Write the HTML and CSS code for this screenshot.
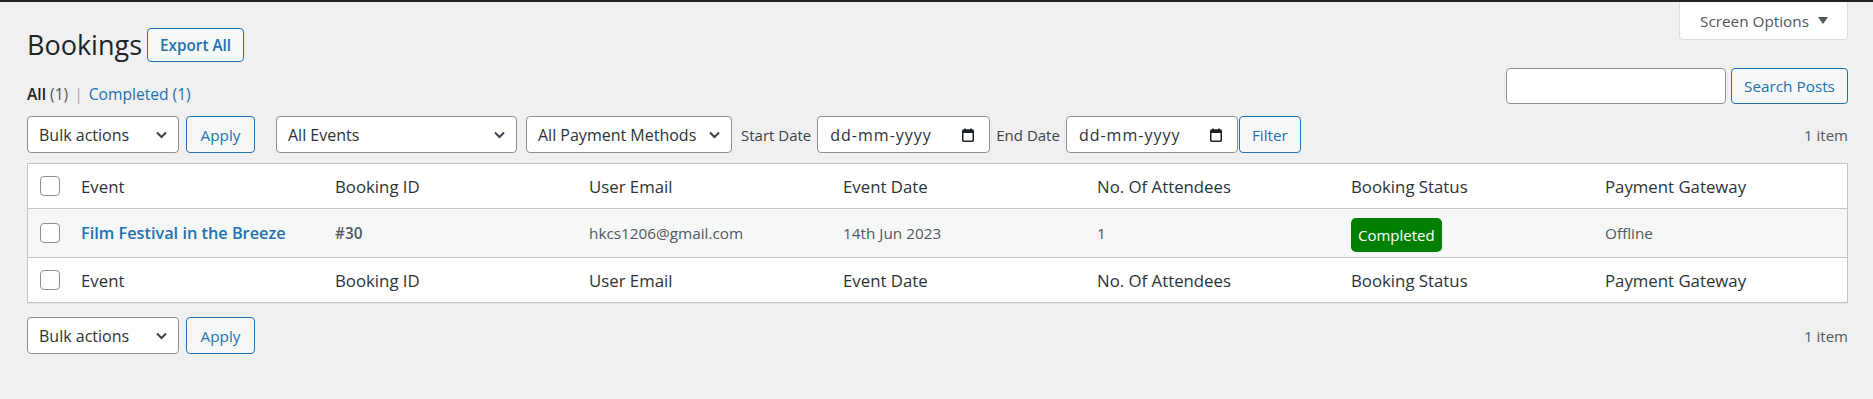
FILE: index.html
```html
<!DOCTYPE html>
<html lang="en">
<head>
  <meta charset="UTF-8">
  <meta name="viewport" content="width=device-width, initial-scale=1.0">
  <title>Bookings</title>
  <link rel="stylesheet" href="styles.css">
</head>
<body>
  <div class="adminbar"></div>

  <div class="wrap">
    <div class="screen-tab">
      Screen Options
      <svg class="tri" width="10" height="7" viewBox="0 0 10 7"><path d="M0 0h10L5 7z" fill="#50575e"/></svg>
    </div>

    <div class="title-row">
      <h1>Bookings</h1>
      <a class="button title-action">Export All</a>
    </div>

    <div class="sub-row">
      <ul class="subsubsub">
        <li class="current">All <span class="count">(1)</span></li>
        <li class="sep">|</li>
        <li><a>Completed <span class="count">(1)</span></a></li>
      </ul>
      <div class="search-box">
        <input type="text" class="search-input">
        <button class="button search-submit">Search Posts</button>
      </div>
    </div>

    <div class="tablenav">
      <div class="select bulk">
        <span>Bulk actions</span>
        <svg width="11" height="8" viewBox="0 0 11 8"><path d="M1 1.5l4.5 4.5 4.5-4.5" fill="none" stroke="#3c434a" stroke-width="2"/></svg>
      </div>
      <button class="button apply">Apply</button>

      <div class="select events">
        <span>All Events</span>
        <svg width="11" height="8" viewBox="0 0 11 8"><path d="M1 1.5l4.5 4.5 4.5-4.5" fill="none" stroke="#3c434a" stroke-width="2"/></svg>
      </div>
      <div class="select methods">
        <span>All Payment Methods</span>
        <svg width="11" height="8" viewBox="0 0 11 8"><path d="M1 1.5l4.5 4.5 4.5-4.5" fill="none" stroke="#3c434a" stroke-width="2"/></svg>
      </div>
      <label class="date-label">Start Date</label>
      <div class="date-field">
        <span>dd-mm-yyyy</span>
        <svg width="12" height="14" viewBox="0 0 12 14"><path d="M3 0.5v2M9 0.5v2" stroke="#1d2327" stroke-width="1.5"/><rect x="0.75" y="2" width="10.5" height="11.25" rx="1" fill="none" stroke="#1d2327" stroke-width="1.5"/><rect x="0.75" y="2" width="10.5" height="3" fill="#1d2327"/></svg>
      </div>
      <label class="date-label">End Date</label>
      <div class="date-field end">
        <span>dd-mm-yyyy</span>
        <svg width="12" height="14" viewBox="0 0 12 14"><path d="M3 0.5v2M9 0.5v2" stroke="#1d2327" stroke-width="1.5"/><rect x="0.75" y="2" width="10.5" height="11.25" rx="1" fill="none" stroke="#1d2327" stroke-width="1.5"/><rect x="0.75" y="2" width="10.5" height="3" fill="#1d2327"/></svg>
      </div>
      <button class="button filter">Filter</button>

      <span class="displaying-num">1 item</span>
    </div>

    <table class="list-table">
      <colgroup>
        <col class="col-check">
        <col><col><col><col><col><col><col>
      </colgroup>
      <thead>
        <tr>
          <th class="check"><span class="cb"></span></th>
          <th>Event</th>
          <th>Booking ID</th>
          <th>User Email</th>
          <th>Event Date</th>
          <th>No. Of Attendees</th>
          <th>Booking Status</th>
          <th>Payment Gateway</th>
        </tr>
      </thead>
      <tbody>
        <tr>
          <td class="check"><span class="cb"></span></td>
          <td><a class="row-title">Film Festival in the Breeze</a></td>
          <td class="booking-id">#30</td>
          <td>hkcs1206@gmail.com</td>
          <td>14th Jun 2023</td>
          <td>1</td>
          <td><span class="status completed">Completed</span></td>
          <td>Offline</td>
        </tr>
      </tbody>
      <tfoot>
        <tr>
          <th class="check"><span class="cb"></span></th>
          <th>Event</th>
          <th>Booking ID</th>
          <th>User Email</th>
          <th>Event Date</th>
          <th>No. Of Attendees</th>
          <th>Booking Status</th>
          <th>Payment Gateway</th>
        </tr>
      </tfoot>
    </table>

    <div class="tablenav bottom">
      <div class="select bulk">
        <span>Bulk actions</span>
        <svg width="11" height="8" viewBox="0 0 11 8"><path d="M1 1.5l4.5 4.5 4.5-4.5" fill="none" stroke="#3c434a" stroke-width="2"/></svg>
      </div>
      <button class="button apply">Apply</button>
      <span class="displaying-num">1 item</span>
    </div>
  </div>
</body>
</html>
```

FILE: styles.css
```css
body {
  margin: 0;
  background: #f0f0f1;
  color: #3c434a;
  font-family: "Open Sans", "Noto Sans", sans-serif;
  font-size: 15.3px;
}
.adminbar {
  height: 2px;
  background: #1d2327;
}
.wrap {
  display: flow-root;
  padding: 0 25px 0 27px;
}
.screen-tab {
  float: right;
  display: flex;
  align-items: center;
  gap: 9px;
  height: 37px;
  padding: 0 19px 0 20px;
  background: #fff;
  border: 1px solid #dcdcde;
  border-top: none;
  border-radius: 0 0 4px 4px;
  color: #50575e;
}
.title-row {
  display: flex;
  align-items: center;
  margin-top: 26px;
  height: 34px;
}
h1 {
  margin: 0;
  font-size: 27px;
  font-weight: 400;
  line-height: 34px;
  color: #1d2327;
}
.button {
  display: inline-flex;
  align-items: center;
  justify-content: center;
  box-sizing: border-box;
  height: 37px;
  padding: 0 14px;
  border: 1px solid #2271b1;
  border-radius: 4px;
  background: #f6f7f7;
  color: #2271b1;
  font-family: inherit;
  font-size: 15.3px;
}
.title-action {
  height: 34px;
  margin-left: 5px;
  padding: 0 12px;
  font-weight: 600;
}
.sub-row {
  display: flex;
  justify-content: space-between;
  align-items: flex-end;
  margin-top: 6px;
  height: 36px;
}
.subsubsub {
  display: flex;
  list-style: none;
  margin: 0 0 -1px;
  padding: 0;
  font-size: 15.6px;
  line-height: 22px;
}
.subsubsub .current {
  color: #1d2327;
  font-weight: 600;
}
.subsubsub .count {
  color: #50575e;
  font-weight: 400;
}
.subsubsub a {
  color: #2271b1;
}
.subsubsub a .count {
  color: #2271b1;
}
.subsubsub .sep {
  margin: 0 6px;
  color: #a7aaad;
}
.search-box {
  display: flex;
  gap: 5px;
}
.search-input {
  box-sizing: border-box;
  width: 220px;
  height: 36px;
  border: 1px solid #8c8f94;
  border-radius: 4px;
  background: #fff;
}
.search-submit {
  width: 117px;
  height: 36px;
  padding: 0;
}
.tablenav {
  display: flex;
  align-items: center;
  margin-top: 12px;
  height: 37px;
}
.tablenav.bottom {
  margin-top: 14px;
}
.select {
  display: flex;
  align-items: center;
  justify-content: space-between;
  box-sizing: border-box;
  height: 37px;
  padding: 0 11px 0 11px;
  border: 1px solid #8c8f94;
  border-radius: 4px;
  background: #fff;
  color: #2c3338;
  font-size: 16px;
}
.select.bulk {
  width: 152px;
  margin-right: 7px;
}
.apply {
  width: 69px;
}
.select.events {
  width: 241px;
  margin-left: 21px;
  margin-right: 9px;
}
.select.methods {
  width: 206px;
  margin-right: 9px;
}
.date-label {
  margin-right: 6px;
  color: #3c434a;
  font-size: 15px;
}
.date-field {
  display: flex;
  align-items: center;
  justify-content: space-between;
  box-sizing: border-box;
  width: 173px;
  height: 37px;
  margin-right: 6px;
  padding: 0 15px 0 12px;
  border: 1px solid #8c8f94;
  border-radius: 4px;
  background: #fff;
  color: #2c3338;
  font-size: 16px;
  letter-spacing: 1px;
}
.date-field.end {
  width: 172px;
  margin-right: 1px;
}
.filter {
  width: 62px;
}
.displaying-num {
  margin-left: auto;
  color: #50575e;
  font-size: 15px;
}
.list-table {
  width: 100%;
  margin-top: 10px;
  border: 1px solid #c3c4c7;
  border-spacing: 0;
  table-layout: fixed;
  background: #fff;
  box-shadow: 0 1px 1px rgba(0,0,0,0.04);
}
.col-check {
  width: 41px;
}
.list-table th,
.list-table td {
  padding: 0 12px;
  text-align: left;
  vertical-align: middle;
  white-space: nowrap;
}
.list-table th {
  color: #2c3338;
  font-size: 16.8px;
  font-weight: 400;
}
.list-table thead tr {
  height: 45px;
}
.list-table thead th {
  border-bottom: 1px solid #c3c4c7;
}
.list-table tfoot tr {
  height: 45px;
}
.list-table tfoot th {
  border-top: 1px solid #c3c4c7;
}
.list-table tbody tr {
  height: 48px;
  background: #f6f7f7;
}
.list-table td {
  color: #50575e;
}
.list-table .check {
  padding: 0 0 0 3px;
}
.cb {
  display: block;
  box-sizing: border-box;
  width: 20px;
  height: 20px;
  margin: 0 auto;
  border: 1px solid #8c8f94;
  border-radius: 4px;
  background: #fff;
}
.row-title {
  color: #2271b1;
  font-size: 16.3px;
  font-weight: 600;
}
.booking-id {
  font-weight: 600;
}
.status {
  display: inline-flex;
  align-items: center;
  height: 34px;
  margin-top: 3px;
  padding: 0 7px;
  border-radius: 5px;
  color: #fff;
  font-size: 15px;
}
.status.completed {
  background: #008000;
}
```
